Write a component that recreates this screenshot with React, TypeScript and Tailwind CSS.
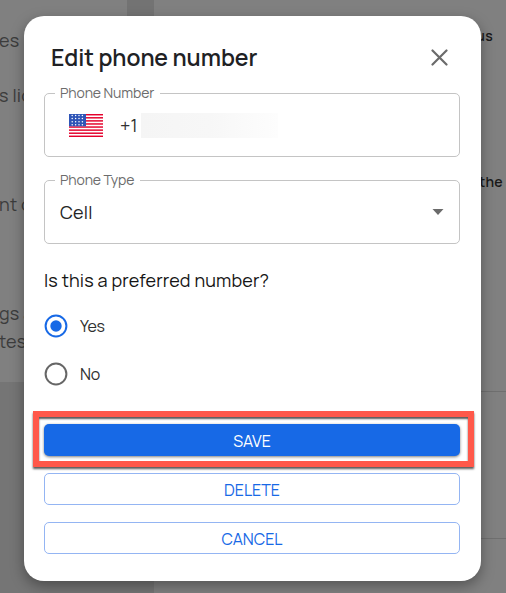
import { useState } from "react";
import type { ReactNode } from "react";

const UsFlag = () => (
  <svg className="h-[23px] w-[34px]" viewBox="0 0 34 23">
    <rect width="34" height="23" fill="#fff" />
    {[0, 1, 2, 3, 4, 5, 6, 7].map((i) => (
      <rect key={i} y={i * 3.08} width="34" height="1.45" fill="#e4002b" />
    ))}
    <rect width="17" height="12.3" fill="#2f55b7" />
    {[1.9, 5.0, 8.1, 11.2].map((y, row) =>
      [2.6, 6, 9.4, 12.8].map((x) => (
        <circle key={`${row}-${x}`} cx={x + 0.6} cy={y - 0.4} r="0.75" fill="#fff" />
      ))
    )}
  </svg>
);

const Field = ({ label, children }: { label: string; children: ReactNode }) => (
  <div className="relative flex h-16 items-center rounded-[5px] border border-[#c4c4c4]">
    <span className="absolute -top-[11px] left-[10px] bg-white pl-[5px] pr-[6px] text-[14px] leading-5 tracking-[-0.12px] text-[#6c6c6c]">
      {label}
    </span>
    {children}
  </div>
);

type RadioProps = { label: string; checked: boolean; onSelect: () => void };

const Radio = ({ label, checked, onSelect }: RadioProps) => (
  <button type="button" role="radio" aria-checked={checked} onClick={onSelect} className="flex h-12 items-center gap-[12px]">
    <svg className="size-6" viewBox="0 0 24 24" fill="none">
      <circle cx="12" cy="12" r="10.4" stroke={checked ? "#1769e6" : "#666"} strokeWidth="2" />
      {checked && <circle cx="12" cy="12" r="5.7" fill="#1769e6" />}
    </svg>
    <span className="text-[16px] tracking-[-0.2px] text-[#303030]">{label}</span>
  </button>
);

const PageBehind = () => (
  <div className="flex h-full text-[#3c3c3c]">
    <div className="flex w-[154px] flex-col">
      <div className="flex h-[382px] bg-[#808080]">
        <div className="w-[127px] whitespace-nowrap pt-[27px] text-[18px] leading-[27px] tracking-[0.2px]">
          <p className="-ml-px">es</p>
          <p className="-ml-px mt-[28px]">s lic</p>
          <p className="mt-[82px] -ml-px">nt c</p>
          <p className="mt-[82px] -ml-px">gs a</p>
          <p className="-ml-px mt-px">tes</p>
        </div>
        <div className="w-[27px] bg-[#737373]" />
      </div>
      <div className="flex-1 bg-[#757575]" />
    </div>
    <div className="flex flex-1 flex-col bg-[#808080] text-[14px] font-semibold leading-5 tracking-[0.3px] text-[#191919]">
      <div className="h-[391px] pt-[26px]">
        <p className="pr-[13px] text-right">us</p>
        <p className="mt-[126px] pr-[3px] text-right">the</p>
      </div>
      <div className="h-[148px] border-y border-[#6f6f6f]" />
    </div>
  </div>
);

const App = () => {
  const [preferred, setPreferred] = useState(true);

  return (
    <div className="relative h-[593px] w-[506px] overflow-hidden bg-[#808080] font-['Manrope','Inter',sans-serif]">
      <PageBehind />

      {/* Dialog */}
      <div className="absolute left-6 top-4 flex h-[565px] w-[457px] flex-col rounded-[20px] bg-white pl-5 pr-[21px] shadow-[0_5px_14px_rgba(0,0,0,0.35)]">
        <div className="flex h-[77px] items-center justify-between pl-[7px] pr-[12px] pt-[5px]">
          <h2 className="text-[23px] font-semibold leading-8 tracking-[-0.06px] text-[#202124]">Edit phone number</h2>
          <button type="button" aria-label="Close">
            <svg className="size-[17px]" viewBox="0 0 17 17" fill="none" stroke="#6b6b6b" strokeWidth="2.2" strokeLinecap="round">
              <path d="M1.5 1.5 15.5 15.5M15.5 1.5 1.5 15.5" />
            </svg>
          </button>
        </div>

        <Field label="Phone Number">
          <div className="ml-6">
            <UsFlag />
          </div>
          <span className="ml-[17px] w-[21px] text-[18px] text-[#303030]">+1</span>
          <div className="h-[25px] w-[137px] bg-linear-to-r from-[#f5f5f5] via-[#f7f7f7] to-[#fdfdfd]" />
        </Field>

        <div className="mt-[23px]">
          <Field label="Phone Type">
            <span className="ml-[15px] flex-1 text-[18px] tracking-[0.2px] text-[#252525]">Cell</span>
            <svg className="mr-[15px] h-[6px] w-3" viewBox="0 0 12 6">
              <path d="M0.5 0h11L6 6z" fill="#6b6b6b" />
            </svg>
          </Field>
        </div>

        <p className="mt-[23px] text-[18px] leading-[27px] tracking-[0.14px] text-[#151515]">Is this a preferred number?</p>
        <div role="radiogroup" className="mt-[8px] flex flex-col items-start">
          <Radio label="Yes" checked={preferred} onSelect={() => setPreferred(true)} />
          <Radio label="No" checked={!preferred} onSelect={() => setPreferred(false)} />
        </div>

        {/* Actions */}
        <div className="-ml-[11px] mt-[13px] h-14 w-[441px] border-6 border-[#ff584a] pl-[5px] pr-2 pt-[7px] shadow-[0_2px_2px_rgba(0,0,0,0.65),inset_0_2px_2px_rgba(0,0,0,0.65)]">
          <button type="button" className="h-8 w-full rounded-[5px] bg-[#1769e6] pt-px text-[16px] text-white shadow-[0_1px_3px_rgba(0,0,0,0.5)]">
            SAVE
          </button>
        </div>
        <button type="button" className="mt-[6px] h-8 rounded-[5px] border border-[#94b5f3] pt-px text-[16px] text-[#1769e6]">
          DELETE
        </button>
        <button type="button" className="mt-[17px] h-8 rounded-[5px] border border-[#94b5f3] pt-px text-[16px] text-[#1769e6]">
          CANCEL
        </button>
      </div>
    </div>
  );
};

export default App;
